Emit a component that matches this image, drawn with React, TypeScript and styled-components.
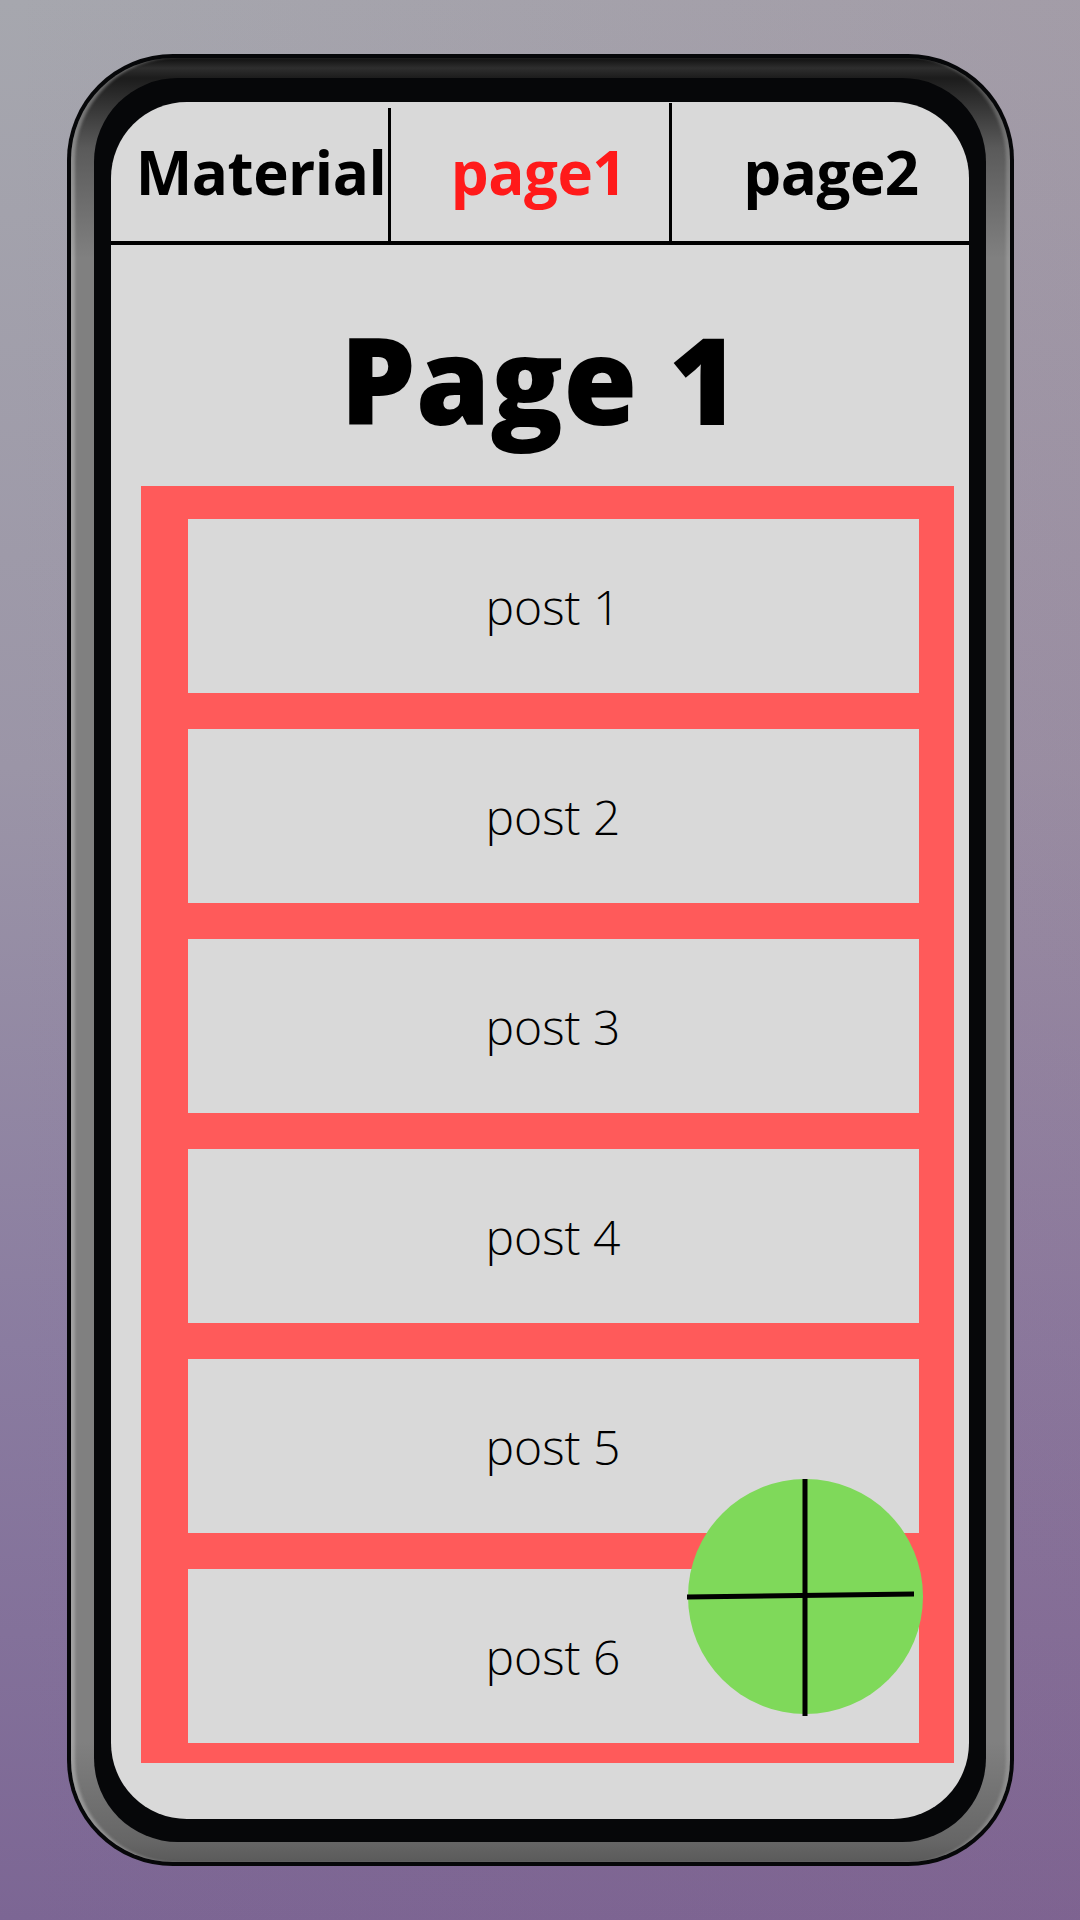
import styled, { createGlobalStyle } from "styled-components";

const GlobalStyle = createGlobalStyle`
  html, body {
    margin: 0;
    padding: 0;
  }
  body {
    font-family: "Open Sans", "Liberation Sans", sans-serif;
  }
`;

const Page = styled.div`
  width: 1080px;
  height: 1920px;
  display: flex;
  align-items: center;
  justify-content: center;
  background: linear-gradient(90deg, rgba(120, 90, 130, 0) 0%, rgba(140, 80, 120, 0.12) 100%),
    linear-gradient(180deg, #a6a7ae 0%, #9b95a7 40%, #8a7ca0 70%, #7c6694 100%);
`;

const Phone = styled.div`
  padding: 4px;
  border-radius: 106px;
  background: #060709;
`;

const Rim = styled.div`
  padding: 20px 24px 20px 23px;
  border-radius: 102px;
  background: linear-gradient(
    180deg,
    #101010 0px,
    #2e2e2e 10px,
    #1c1c1c 20px,
    #5a5a5a 90px,
    #808080 200px,
    #808080 calc(100% - 120px),
    #666 calc(100% - 20px),
    #5a5a5a 100%
  );
  box-shadow: inset 5px 0 3px -1px rgba(210, 210, 210, 0.4),
    inset -6px 0 3px -2px rgba(200, 200, 200, 0.3);
`;

const Bezel = styled.div`
  padding: 24px 17px 23px 17px;
  border-radius: 84px;
  background: #060709;
`;

const Screen = styled.div`
  position: relative;
  width: 858px;
  height: 1717px;
  border-radius: 76px;
  overflow: hidden;
  background: #d9d9d9;
  display: flex;
  flex-direction: column;
`;

const TabBar = styled.nav`
  display: flex;
  height: 139px;
  border-bottom: 4px solid #000;
  flex-shrink: 0;
`;

const Tab = styled.div<{ $width?: number; $active?: boolean; $shift: number }>`
  width: ${(p) => (p.$width ? `${p.$width}px` : "auto")};
  flex: ${(p) => (p.$width ? "none" : "1")};
  display: flex;
  align-items: center;
  justify-content: center;
  padding-left: ${(p) => p.$shift}px;
  box-sizing: border-box;
  font-size: 60px;
  font-weight: 700;
  letter-spacing: -0.5px;
  color: ${(p) => (p.$active ? "#ff1a1a" : "#000")};
  white-space: nowrap;
`;

const Divider = styled.div<{ $inset: number }>`
  width: 3px;
  margin-top: ${(p) => p.$inset}px;
  background: #000;
  flex-shrink: 0;
`;

const Heading = styled.h1`
  margin: 74px 0 47px;
  font-size: 120px;
  line-height: 120px;
  font-weight: 800;
  text-align: center;
  color: #000;
`;

const PostList = styled.div`
  margin: 0 15px 0 30px;
  padding: 33px 35px 20px 47px;
  background: #ff5a5a;
  display: flex;
  flex-direction: column;
  gap: 36px;
`;

const Post = styled.div`
  height: 174px;
  display: flex;
  align-items: center;
  justify-content: center;
  background: #d9d9d9;
  font-size: 48px;
  font-weight: 300;
  color: #000;
`;

const Fab = styled.button`
  position: absolute;
  left: 577px;
  top: 1377px;
  width: 235px;
  height: 235px;
  padding: 0;
  border: none;
  border-radius: 50%;
  background: #7fd95a;
  cursor: pointer;

  svg {
    display: block;
    overflow: visible;
  }
`;

const posts = [1, 2, 3, 4, 5, 6];

export default function App() {
  return (
    <>
      <GlobalStyle />
      <Page>
        <Phone>
          <Rim>
            <Bezel>
              <Screen>
                <TabBar>
                  <Tab $width={277} $shift={24}>
                    Material
                  </Tab>
                  <Divider $inset={6} />
                  <Tab $width={278} $active $shift={18}>
                    page1
                  </Tab>
                  <Divider $inset={1} />
                  <Tab $shift={22}>page2</Tab>
                </TabBar>

                <Heading>Page 1</Heading>

                <PostList>
                  {posts.map((n) => (
                    <Post key={n}>post {n}</Post>
                  ))}
                </PostList>

                <Fab aria-label="Add post">
                  <svg width="235" height="235" viewBox="0 0 235 235">
                    <line x1="117" y1="0" x2="117" y2="237" stroke="#000" strokeWidth="5" />
                    <line x1="-1" y1="118" x2="226" y2="115" stroke="#000" strokeWidth="5" />
                  </svg>
                </Fab>
              </Screen>
            </Bezel>
          </Rim>
        </Phone>
      </Page>
    </>
  );
}
